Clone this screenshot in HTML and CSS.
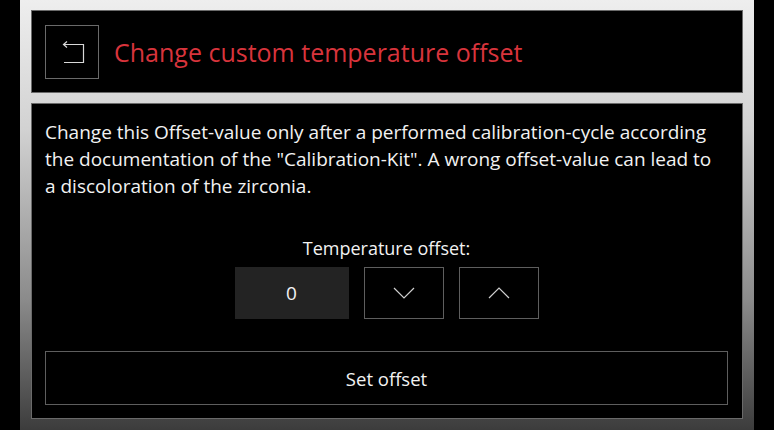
FILE: index.html
```html
<!DOCTYPE html>
<html lang="en">
<head>
    <meta charset="UTF-8">
    <meta name="viewport" content="width=device-width, initial-scale=1.0">
    <title>Change custom temperature offset</title>
    <link rel="stylesheet" href="styles.css">
</head>
<body>
    <div class="frame">
        <div class="panel header">
            <button class="back-btn" type="button">
                <svg width="24" height="24" viewBox="0 0 24 24">
                    <path d="M3 4.5 H22.5 V22.5 H3" fill="none" stroke="#d8d8d8" stroke-width="1.2"/>
                    <path d="M6 1.5 L2.5 4.5 L6 7.5" fill="none" stroke="#d8d8d8" stroke-width="1.2"/>
                </svg>
            </button>
            <h1 class="title">Change custom temperature offset</h1>
        </div>
        <div class="panel content">
            <p class="info">Change this Offset-value only after a performed calibration-cycle according the documentation of the "Calibration-Kit". A wrong offset-value can lead to a discoloration of the zirconia.</p>
            <div class="offset">
                <div class="offset-label">Temperature offset:</div>
                <div class="offset-row">
                    <div class="offset-value">0</div>
                    <button class="step-btn" type="button">
                        <svg width="22" height="12" viewBox="0 0 22 12">
                            <path d="M1 1 L11 11 L21 1" fill="none" stroke="#cfcfcf" stroke-width="1.2"/>
                        </svg>
                    </button>
                    <button class="step-btn" type="button">
                        <svg width="22" height="12" viewBox="0 0 22 12">
                            <path d="M1 11 L11 1 L21 11" fill="none" stroke="#cfcfcf" stroke-width="1.2"/>
                        </svg>
                    </button>
                </div>
            </div>
            <button class="set-btn" type="button">Set offset</button>
        </div>
    </div>
</body>
</html>
```

FILE: styles.css
```css
* {
    box-sizing: border-box;
}
body {
    margin: 0;
    background: #000;
    font-family: "Open Sans", "Noto Sans", sans-serif;
    color: #f2f2f2;
}
.frame {
    width: 734px;
    height: 430px;
    margin: 0 20px;
    padding: 10px 11px 11px 11px;
    display: flex;
    flex-direction: column;
    gap: 10px;
    background: linear-gradient(#eeeeee 0%, #d2d2d2 30%, #8a8a8a 70%, #3c3c3c 100%);
}
.panel {
    background: #000;
    border: 1px solid #6a6a6a;
}
.header {
    height: 83px;
    display: flex;
    align-items: center;
    gap: 15px;
    padding: 0 13px;
}
.back-btn {
    width: 54px;
    height: 54px;
    background: #000;
    border: 1px solid #6a6a6a;
    display: flex;
    align-items: center;
    justify-content: center;
    padding: 0 0 0 1px;
}
.title {
    margin: 0;
    font-size: 25px;
    font-weight: normal;
    color: #d8343c;
}
.content {
    flex: 1;
    display: flex;
    flex-direction: column;
    padding: 15px 14px 13px 13px;
}
.info {
    margin: 0;
    max-width: 680px;
    font-size: 19px;
    line-height: 27px;
}
.offset {
    display: flex;
    flex-direction: column;
    align-items: center;
    margin-top: 36px;
}
.offset-label {
    font-size: 18px;
    line-height: 24px;
}
.offset-row {
    display: flex;
    gap: 15px;
    margin-top: 7px;
}
.offset-value {
    width: 114px;
    height: 52px;
    background: #232323;
    display: flex;
    align-items: center;
    justify-content: center;
    font-size: 19px;
}
.step-btn {
    width: 80px;
    height: 52px;
    background: #000;
    border: 1px solid #5e5e5e;
    display: flex;
    align-items: center;
    justify-content: center;
}
.set-btn {
    margin-top: auto;
    height: 54px;
    background: #000;
    border: 1px solid #5e5e5e;
    color: #f2f2f2;
    font-family: inherit;
    font-size: 18.5px;
}
```
